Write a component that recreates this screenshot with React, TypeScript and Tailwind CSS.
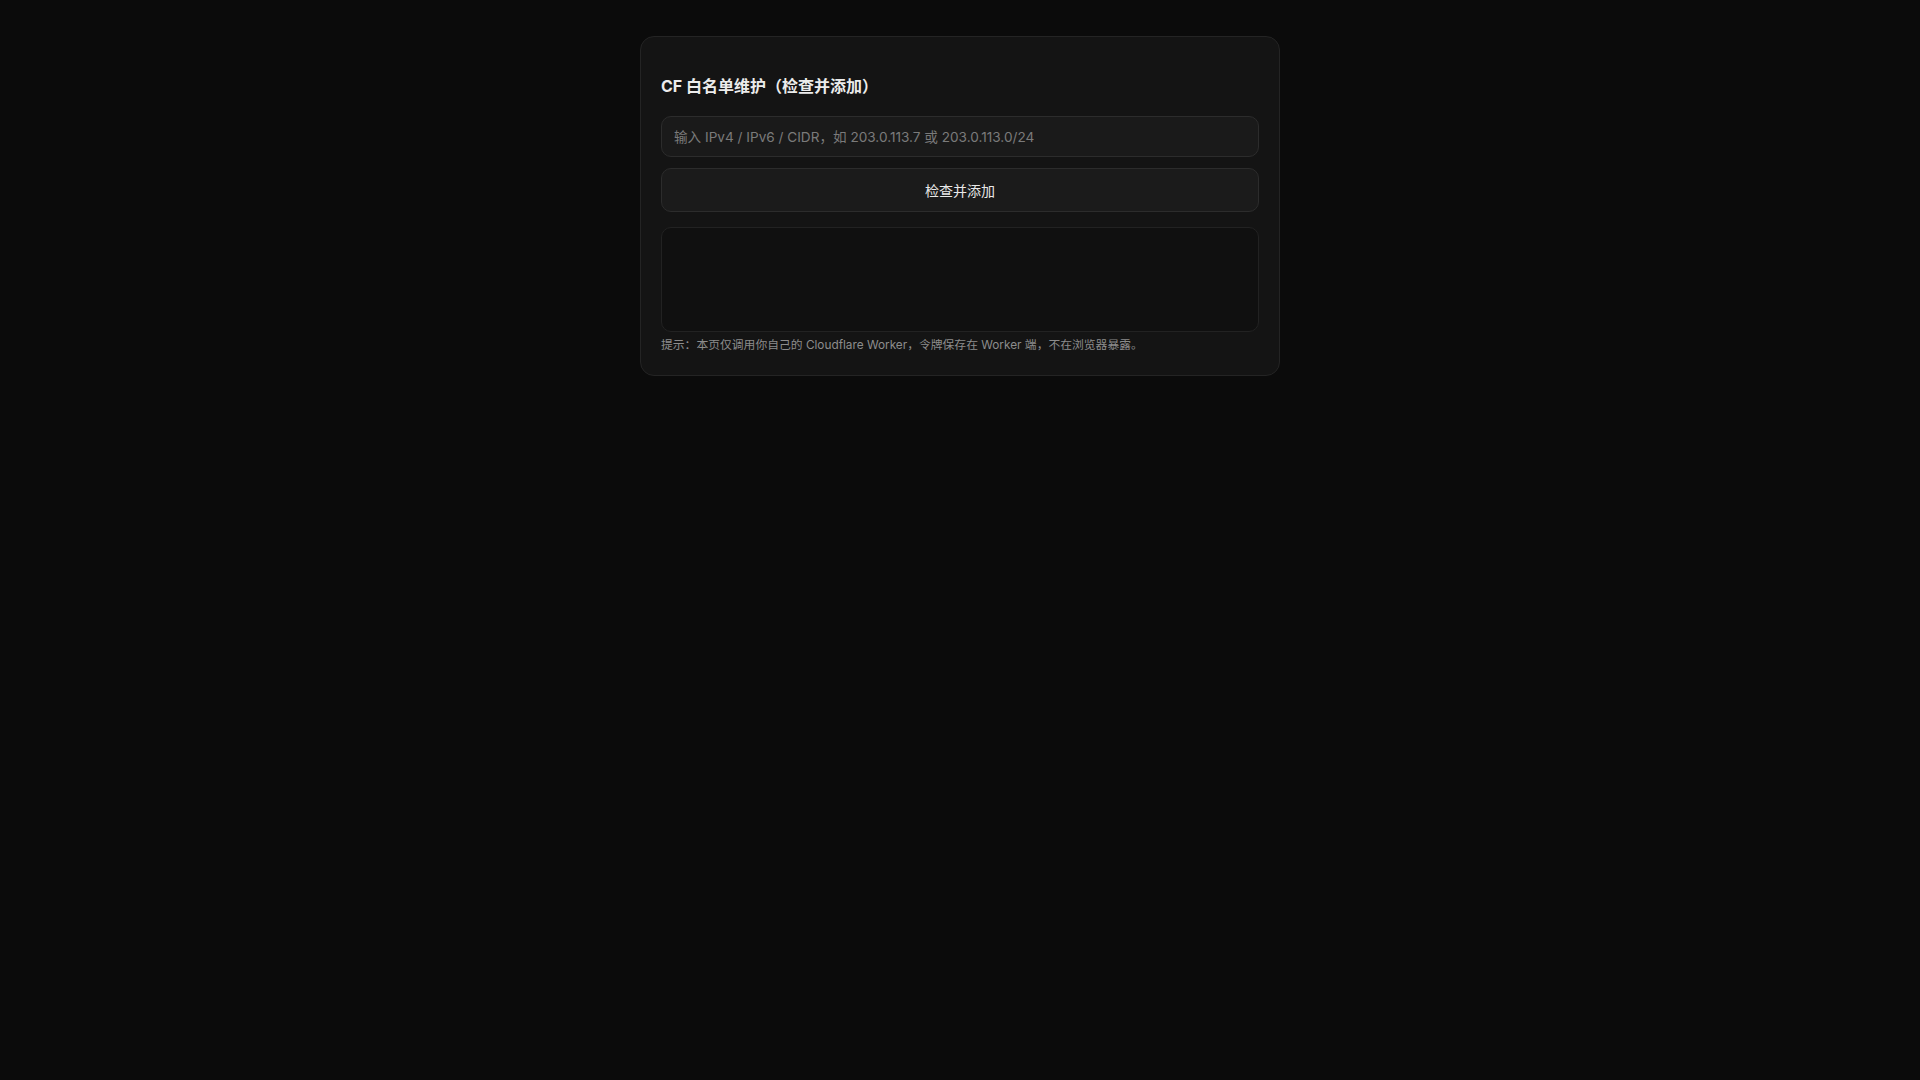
import React from "react";

export default function App() {
  return (
    <div
      className="min-h-screen w-full bg-[#0b0b0b] pt-[36px]"
      style={{ fontFamily: 'Inter, "Noto Sans CJK SC", sans-serif' }}
    >
      <div className="mx-auto w-[640px] rounded-[14px] border border-[#242424] bg-[#141414] px-[20px] pt-[37px] pb-[21px]">
        <h1 className="mb-[18px] text-[16px] font-bold leading-6 text-[#ececec]">
          CF 白名单维护（检查并添加）
        </h1>
        <input
          type="text"
          placeholder="输入 IPv4 / IPv6 / CIDR，如 203.0.113.7 或 203.0.113.0/24"
          className="block h-[41px] w-full rounded-[10px] border border-[#2c2c2c] bg-[#1a1a1a] px-[12px] text-[13.6px] text-[#e5e5e5] outline-none placeholder:text-[#7a7a7a]"
        />
        <button className="mt-[11px] block h-[44px] w-full rounded-[10px] border border-[#2c2c2c] bg-[#1b1b1b] text-[14px] text-[#e8e8e8]">
          检查并添加
        </button>
        <div className="mt-[15px] h-[105px] w-full rounded-[10px] border border-[#222222] bg-[#101010]"></div>
        <p className="mt-[4px] text-[11.8px] leading-[18px] text-[#8c8c8c]">
          提示：本页仅调用你自己的 Cloudflare Worker，令牌保存在 Worker 端，不在浏览器暴露。
        </p>
      </div>
    </div>
  );
}
